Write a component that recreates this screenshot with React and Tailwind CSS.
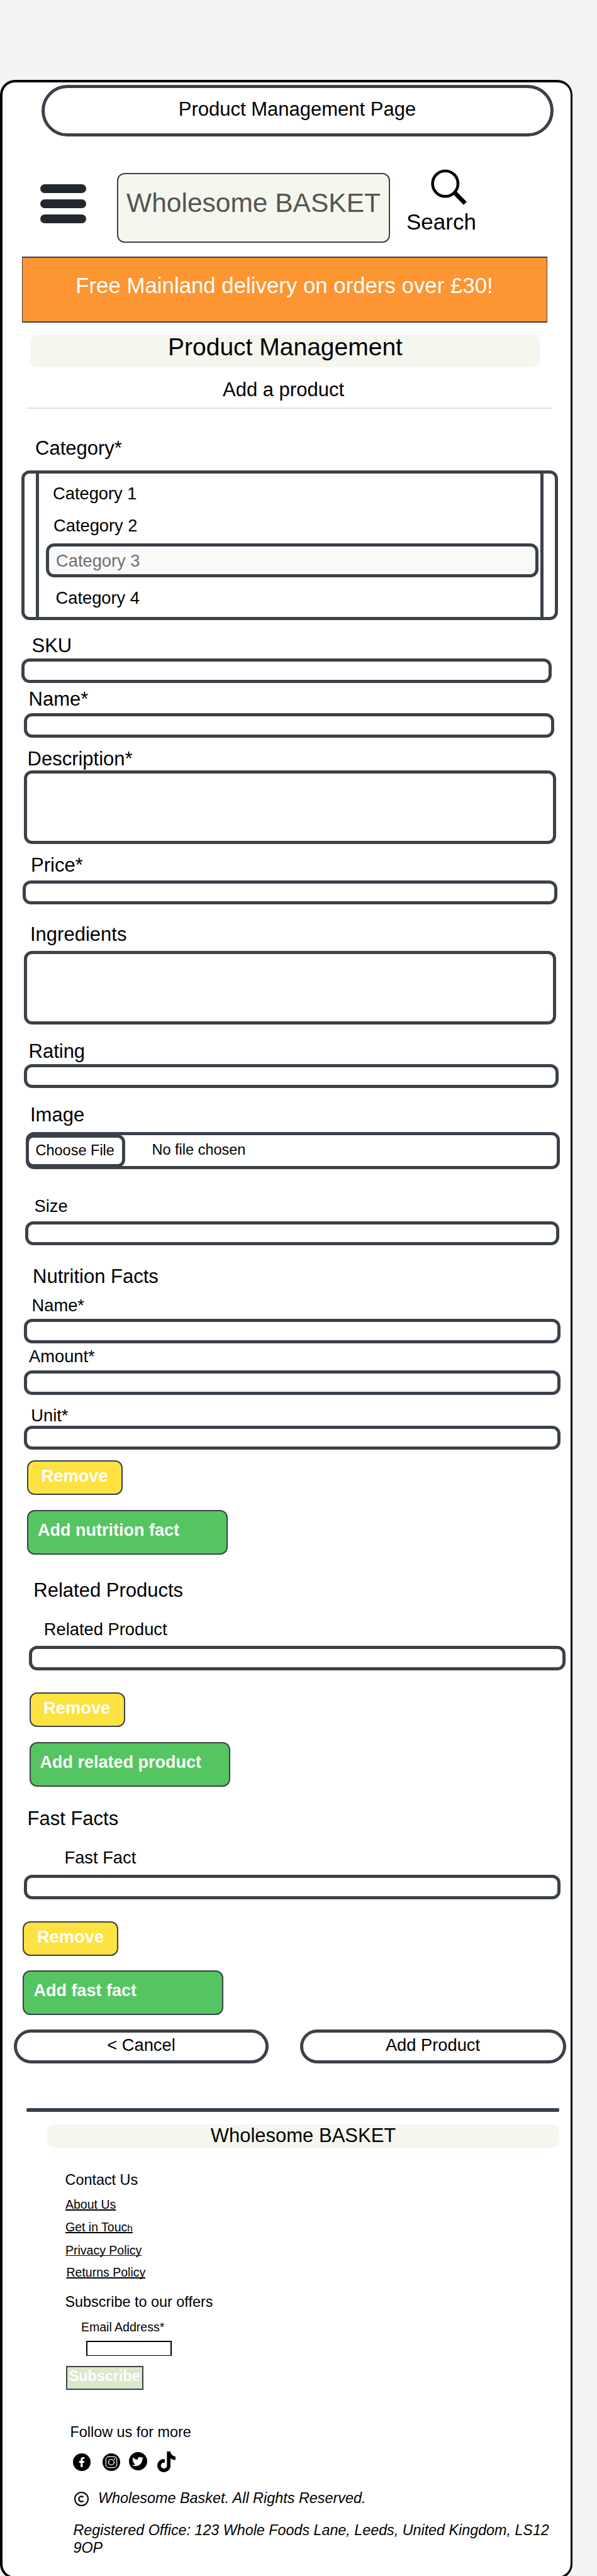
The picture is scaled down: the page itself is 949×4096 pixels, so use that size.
import React from "react";
import { FaFacebookF, FaTwitter, FaTiktok } from "react-icons/fa";

const L = "block whitespace-nowrap text-[31px] leading-[35px]";
const M = "block whitespace-nowrap text-[27.3px] leading-[31px]";
const S = "block whitespace-nowrap text-[23.4px] leading-[26px]";
const XS = "block whitespace-nowrap text-[19.5px] leading-[22px]";

function Field({ className }) {
  return <div className={"shrink-0 rounded-[13px] border-[5px] border-[#3a414a] bg-white " + className} />;
}

function RemoveButton({ className }) {
  return (
    <div
      className={
        "h-[55px] w-[152px] shrink-0 rounded-[12px] border-2 border-[#3a414a] bg-[#fee241] pl-[20.5px] pt-[7px] text-[27.3px] leading-[31px] font-bold text-white " +
        className
      }
    >
      Remove
    </div>
  );
}

function AddButton({ className, children }) {
  return (
    <div
      className={
        "h-[71px] w-[319px] shrink-0 rounded-[12px] border-2 border-[#3a414a] bg-[#54c560] pl-[15px] pt-[15px] text-[27px] leading-[31px] font-bold whitespace-nowrap text-white " +
        className
      }
    >
      {children}
    </div>
  );
}

function Header() {
  return (
    <header className="flex h-[191px] shrink-0 items-start">
      <div className="mt-[76px] ml-[59.5px] flex w-[73px] flex-col gap-[10px]">
        <span className="h-[14px] rounded-full bg-[#232830]" />
        <span className="h-[14px] rounded-full bg-[#232830]" />
        <span className="h-[14px] rounded-full bg-[#232830]" />
      </div>
      <div className="mt-[58px] ml-[49.5px] h-[111px] w-[434px] rounded-[12px] border-2 border-[#3a414a] bg-[#f5f7ee] pt-[22px] text-center text-[42.5px] leading-[48px] whitespace-nowrap text-[#535650]">
        Wholesome BASKET
      </div>
      <div className="mt-[52px] ml-[26px] flex flex-col">
        <svg className="ml-[39px] block" width="60" height="57" viewBox="0 0 60 57">
          <circle cx="22.8" cy="23" r="20.2" fill="none" stroke="#000" strokeWidth="4.6" />
          <path d="M37 36.5L54.4 54.3" stroke="#000" strokeWidth="6.8" />
        </svg>
        <span className="mt-[7px] text-[35px] leading-[39px]">Search</span>
      </div>
    </header>
  );
}

function CategoryList() {
  return (
    <div className="mt-[18px] ml-[30px] h-[238px] w-[853px] shrink-0 rounded-[13px] border-[5px] border-[#3a414a] bg-white">
      <div className="ml-[18px] flex h-[228px] w-[807px] flex-col border-x-[5px] border-[#3a414a] pt-[16px]">
        <span className={M + " pl-[22px]"}>Category 1</span>
        <span className={M + " mt-5 pl-[23px]"}>Category 2</span>
        <div className="mt-[13px] ml-[10.5px] h-[54px] w-[783px] rounded-[13px] border-[5px] border-[#3a414a] bg-[#f9f9f9] pt-[7px] pl-[11.5px] text-[27.3px] leading-[31px] text-[#6f6f6f]">
          Category 3
        </div>
        <span className={M + " mt-[17px] pl-[26.5px]"}>Category 4</span>
      </div>
    </div>
  );
}

function InstagramBadge({ className }) {
  return (
    <svg className={className} width="28" height="28" viewBox="0 0 28 28" fill="none">
      <circle cx="14" cy="14" r="14" fill="#000" />
      <rect x="5.3" y="5.3" width="17.4" height="17.4" rx="4.5" stroke="#fff" strokeWidth="1.2" />
      <circle cx="14" cy="14" r="4.4" stroke="#fff" strokeWidth="1.4" />
      <circle cx="19.2" cy="8.8" r="1.1" fill="#fff" />
    </svg>
  );
}

function Footer() {
  return (
    <footer className="flex flex-col items-start">
      <div className="mt-[20px] ml-[71px] h-[37px] w-[814px] rounded-[10px] bg-[#f5f7ee] text-center text-[31px] leading-[35px]">
        Wholesome BASKET
      </div>
      <span className={S + " mt-[38px] ml-[99.5px]"}>Contact Us</span>
      <a className={XS + " mt-[15px] ml-[100px] underline decoration-[1.5px] [text-decoration-skip-ink:none]"}>About Us</a>
      <a className={XS + " mt-[14px] ml-[100px] underline decoration-[1.5px] [text-decoration-skip-ink:none]"}>
        Get in Touc<span className="text-[15.5px] leading-none">h</span>
      </a>
      <a className={XS + " mt-[15px] ml-[100px] underline decoration-1 [text-decoration-skip-ink:none]"}>Privacy Policy</a>
      <a className={XS + " mt-[13px] ml-[101.5px] underline decoration-[1.5px] [text-decoration-skip-ink:none]"}>Returns Policy</a>
      <span className={S + " mt-[23px] ml-[99.5px]"}>Subscribe to our offers</span>
      <span className={XS + " mt-[16px] ml-[125px]"}>Email Address*</span>
      <div className="mt-[11px] ml-[133px] h-[24px] w-[136px] border-2 border-b border-black" />
      <div className="mt-[16px] ml-[101px] h-[38px] w-[123px] border-2 border-[#3a414a] bg-[#dbe8cb] pt-px pl-[2.5px] text-[23.4px] leading-[26px] font-bold text-white">
        Subscribe
      </div>
      <span className={S + " mt-[54px] ml-[107.5px]"}>Follow us for more</span>
      <div className="mt-[18px] ml-[111.5px] flex h-[33px] items-start">
        <div className="mt-[3px] flex h-7 w-7 items-center justify-center rounded-full bg-black text-white">
          <FaFacebookF size={16} />
        </div>
        <InstagramBadge className="mt-[3px] ml-[19px] block" />
        <div className="mt-px ml-[14px] flex h-[29px] w-[29px] items-center justify-center rounded-full bg-black text-white">
          <FaTwitter size={18} />
        </div>
        <FaTiktok className="ml-[16px] h-[33px] w-[29px]" />
      </div>
      <div className="mt-[28px] ml-[114.3px] flex h-[26px] items-start">
        <svg className="mt-[2.7px] block" width="23" height="23" viewBox="0 0 23 23" fill="none" stroke="#000">
          <circle cx="11.5" cy="11.5" r="10.5" strokeWidth="2" />
          <path d="M14.6 8.6A4.2 4.2 0 1 0 14.6 14.4" strokeWidth="2.2" />
        </svg>
        <span className={S + " ml-[14.7px] italic"}>Wholesome Basket. All Rights Reserved.</span>
      </div>
      <p className="mt-[24px] ml-[112.5px] w-[768px] text-[23.3px] leading-[28px] italic">
        Registered Office: 123 Whole Foods Lane, Leeds, United Kingdom, LS12 9OP
      </p>
    </footer>
  );
}

export default function App() {
  return (
    <div className="h-[4096px] w-[949px] overflow-hidden bg-[#f1f3f5] pt-[127px] font-['Liberation_Sans',Arial,sans-serif] text-black">
      <main className="flex h-[3974px] w-[910px] flex-col items-start rounded-[24px] border-t-4 border-r-[3px] border-b-4 border-l-4 border-black bg-white">
        <div className="mt-1 ml-[61.5px] h-[82px] w-[814px] shrink-0 rounded-full border-[5px] border-[#3a414a] pt-4 text-center text-[31px] leading-[35px]">
          Product Management Page
        </div>
        <Header />
        <div className="ml-[30.5px] h-[105px] w-[835px] shrink-0 border-x border-y-2 border-[#3a414a] bg-[#fd9532] pt-[24px] text-center text-[34.8px] leading-[39px] whitespace-nowrap text-white">
          Free Mainland delivery on orders over £30!
        </div>
        <div className="mt-[20px] ml-[44px] h-[51px] w-[811px] shrink-0 rounded-[10px] bg-[#f5f7ee] text-center text-[39px] leading-[37px]">
          Product Management
        </div>
        <span className={L + " mt-[18px] ml-[41px] w-[811px] text-center"}>Add a product</span>
        <div className="mt-[11px] ml-[38px] h-[2px] w-[836px] shrink-0 bg-[#dfe1e8]" />

        <span className={L + " mt-[45px] ml-[52px]"}>Category*</span>
        <CategoryList />

        <span className={L + " mt-[23px] ml-[46.5px]"}>SKU</span>
        <Field className="mt-[3px] ml-[30px] h-[39px] w-[843px]" />
        <span className={L + " mt-[8px] ml-[41.5px]"}>Name*</span>
        <Field className="mt-[5px] ml-[33.5px] h-[39px] w-[843px]" />
        <span className={L + " mt-[16px] ml-[39.5px]"}>Description*</span>
        <Field className="mt-px ml-[33.5px] h-[117px] w-[846px]" />
        <span className={L + " mt-[16px] ml-[45px]"}>Price*</span>
        <Field className="mt-[7px] ml-[32px] h-[38px] w-[850px]" />
        <span className={L + " mt-[30px] ml-[44px]"}>Ingredients</span>
        <Field className="mt-[9px] ml-[33.5px] h-[117px] w-[846px]" />
        <span className={L + " mt-[25px] ml-[41.5px]"}>Rating</span>
        <Field className="mt-[3px] ml-[33.5px] h-[38px] w-[850px]" />
        <span className={L + " mt-[25px] ml-[44px]"}>Image</span>
        <div className="mt-[10px] ml-[37px] flex h-[59px] w-[849px] shrink-0 items-start rounded-[13px] border-[5px] border-[#3a414a] bg-white text-[23.5px] leading-[26px]">
          <div className="-mt-px -ml-[5px] h-[52px] w-[158px] shrink-0 rounded-[12px] border-[5px] border-[#3a414a] pt-[7px] pl-[10.5px] whitespace-nowrap">
            Choose File
          </div>
          <span className="mt-[10px] ml-[42.5px]">No file chosen</span>
        </div>
        <span className={M + " mt-[43px] ml-[50.5px]"}>Size</span>
        <Field className="mt-[9px] ml-[35.5px] h-[38px] w-[849px]" />

        <span className={L + " mt-[32px] ml-[48px]"}>Nutrition Facts</span>
        <span className={M + " mt-[13px] ml-[46.5px]"}>Name*</span>
        <Field className="mt-[6px] ml-[33.5px] h-[39px] w-[853px]" />
        <span className={M + " mt-[5px] ml-[42px]"}>Amount*</span>
        <Field className="mt-[7px] ml-[33.5px] h-[39px] w-[853px]" />
        <span className={M + " mt-[17px] ml-[45.3px]"}>Unit*</span>
        <Field className="mt-px ml-[33.5px] h-[38px] w-[853px]" />
        <RemoveButton className="mt-[17px] ml-[39px]" />
        <AddButton className="mt-[24px] ml-[39px]">Add nutrition fact</AddButton>

        <span className={L + " mt-[39px] ml-[49.3px]"}>Related Products</span>
        <span className={M + " mt-[29px] ml-[65.8px]"}>Related Product</span>
        <Field className="mt-[11px] ml-[42px] h-[39px] w-[853px]" />
        <RemoveButton className="mt-[35px] ml-[42.6px]" />
        <AddButton className="mt-[24px] ml-[42.6px]">Add related product</AddButton>

        <span className={L + " mt-[33px] ml-[39.5px]"}>Fast Facts</span>
        <span className={M + " mt-[29px] ml-[98.5px]"}>Fast Fact</span>
        <Field className="mt-[12px] ml-[33.5px] h-[39px] w-[853px]" />
        <RemoveButton className="mt-[35px] ml-[32.4px]" />
        <AddButton className="mt-[23px] ml-[32.4px]">Add fast fact</AddButton>

        <div className="mt-[23px] ml-[18px] flex shrink-0 gap-[49.5px] text-center text-[27.3px] leading-[31px]">
          <div className="h-[54px] w-[405px] rounded-full border-[5px] border-[#3a414a] pt-1">&lt; Cancel</div>
          <div className="h-[54px] w-[423px] rounded-full border-[5px] border-[#3a414a] pt-1">Add Product</div>
        </div>
        <div className="mt-[71px] ml-[38px] h-[6px] w-[847px] shrink-0 rounded-[2px] bg-[#3a414a]" />
        <Footer />
      </main>
    </div>
  );
}
